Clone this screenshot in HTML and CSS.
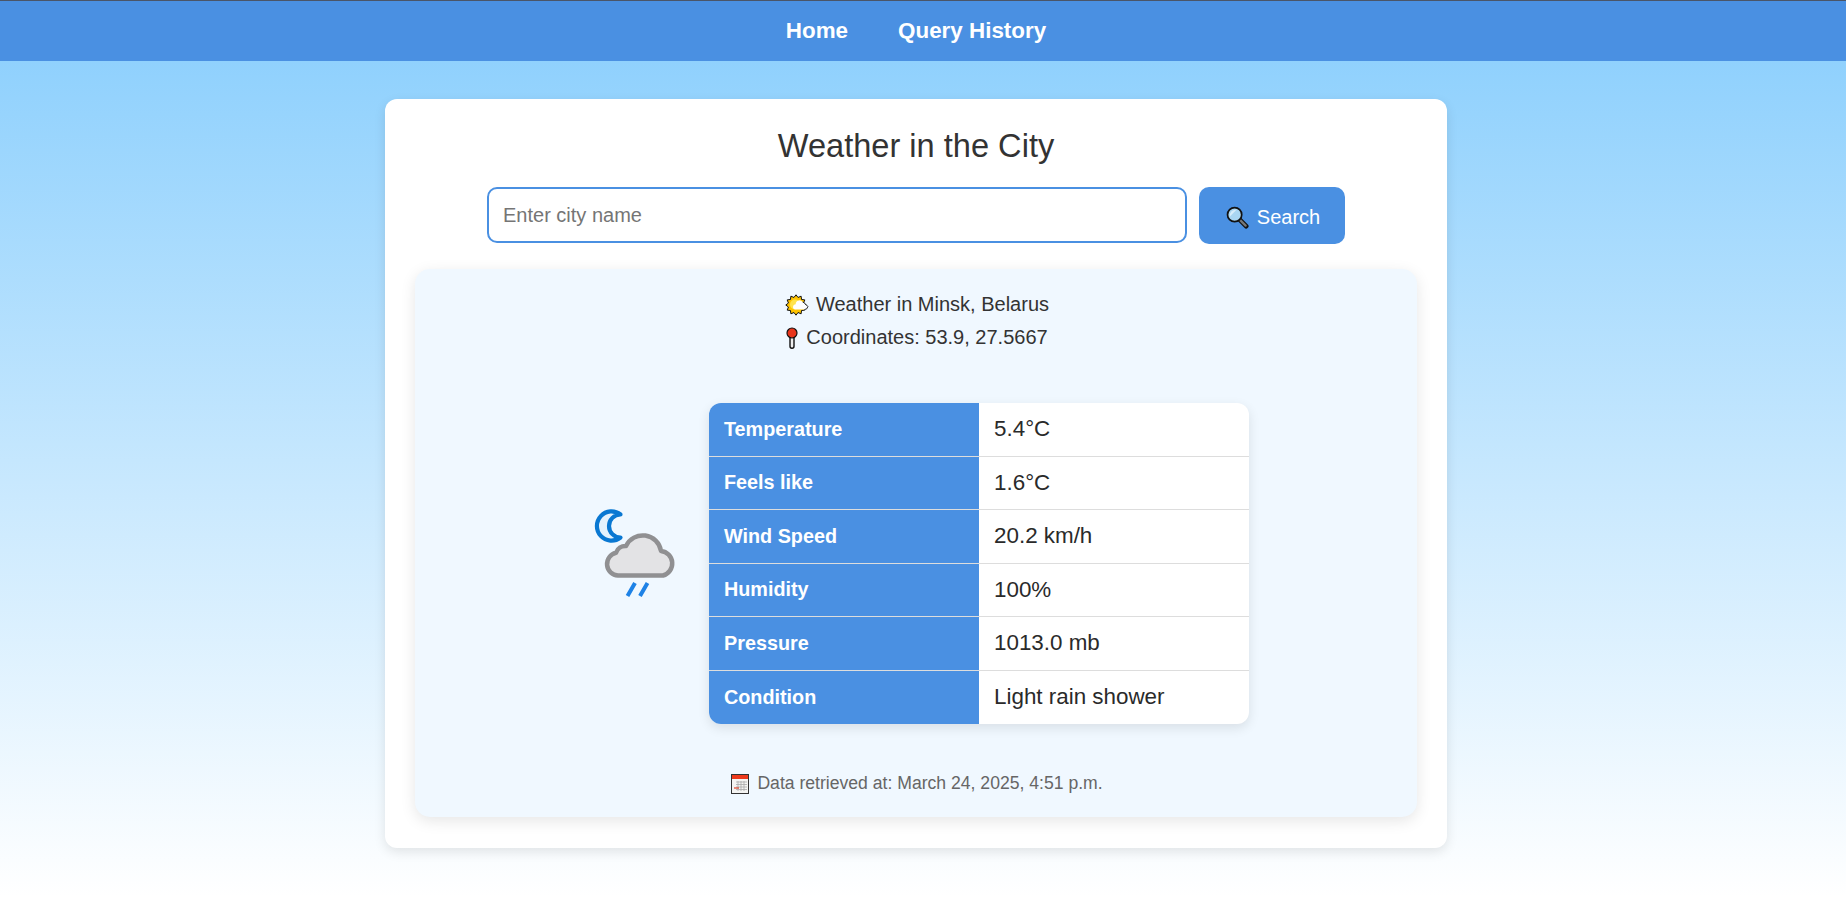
FILE: index.html
```html
<!DOCTYPE html>
<html lang="en">
<head>
<meta charset="utf-8">
<title>Weather in the City</title>
<link rel="stylesheet" href="styles.css">
</head>
<body>
<nav class="nav">
  <a class="nav-link" href="#">Home</a>
  <a class="nav-link" href="#">Query History</a>
</nav>
<main class="card">
  <h1 class="title">Weather in the City</h1>
  <form class="search">
    <input class="search-input" type="text" placeholder="Enter city name">
    <button class="search-btn" type="button">
      <svg class="ico-search" viewBox="0 0 24 24"><path d="M14 14l7 7" stroke="#111" stroke-width="5" stroke-linecap="round"/><path d="M14.500 14.500l6 6" stroke="#777" stroke-width="2.400" stroke-linecap="round"/><circle cx="9" cy="9" r="7.400" fill="#a9d6f2" stroke="#111" stroke-width="1.800"/><path d="M4 11a6 6 0 0 1 7-7L4 11z" fill="#d8eefb"/></svg>
      Search
    </button>
  </form>
  <section class="result">
    <p class="place"><svg class="ico-sun" viewBox="-1 0 24 21"><polygon points="20.2,10.5 17.53,12.52 18.83,15.6 15.52,16.02 15.1,19.33 12.02,18.03 10,20.7 7.98,18.03 4.9,19.33 4.48,16.02 1.17,15.6 2.47,12.52 -0.2,10.5 2.47,8.48 1.17,5.4 4.48,4.98 4.9,1.67 7.98,2.97 10,0.3 12.02,2.97 15.1,1.67 15.52,4.98 18.83,5.4 17.53,8.48" fill="#ffc400" stroke="#111" stroke-width="1" stroke-linejoin="miter"/><circle cx="9" cy="10" r="5" fill="#ffe34d"/><path d="M9.500 15a2.600 2.600 0 0 1 .2-5.200 3.800 3.800 0 0 1 7-2.200 3.400 3.400 0 0 1 2.800 2.400q2.400 1.300 2.400 2-.6 3-3.200 3z" fill="#fff"/><path d="M16.700 7.600a3.400 3.400 0 0 1 2.800 2.400q2.400 1.300 2.400 2-.6 3-3.200 3" fill="none" stroke="#111" stroke-width=".9"/></svg> Weather in Minsk, Belarus</p>
    <p class="coords"><svg class="ico-pin" viewBox="0 0 12 22"><rect x="4" y="9" width="4" height="12.300" rx="2" fill="#eee" stroke="#111" stroke-width="1.400"/><circle cx="6" cy="6" r="5" fill="#e8361c" stroke="#111" stroke-width="1.200"/></svg> Coordinates: 53.9, 27.5667</p>
    <div class="details">
      <svg class="ico-weather" viewBox="583 505 96 96">
        <path d="M620.500 514.500A14.600 14.600 0 1 0 620.500 537.500A11.500 11.500 0 0 1 620.500 514.500z" fill="#e4f2fd" stroke="#0a78d2" stroke-width="4.200" stroke-linejoin="round"/>
        <path d="M618 575.500A11.500 11.500 0 0 1 616 552.800A10 10 0 0 1 626 546A18.500 18.500 0 0 1 661 551A12.500 12.500 0 0 1 663 575.500z" fill="#e3e3e5" stroke="#909092" stroke-width="4.500" stroke-linejoin="round"/>
        <path d="M627.500 596l7.500-13M640 596l7.500-13" stroke="#1e82e6" stroke-width="4" fill="none"/>
      </svg>
      <table class="stats">
        <tr><th>Temperature</th><td>5.4°C</td></tr>
        <tr><th>Feels like</th><td>1.6°C</td></tr>
        <tr><th>Wind Speed</th><td>20.2 km/h</td></tr>
        <tr><th>Humidity</th><td>100%</td></tr>
        <tr><th>Pressure</th><td>1013.0 mb</td></tr>
        <tr><th>Condition</th><td>Light rain shower</td></tr>
      </table>
    </div>
    <p class="stamp"><svg class="ico-cal" viewBox="0 0 18 20"><rect x=".5" y=".5" width="17" height="19" fill="#f4f4f2" stroke="#333"/><rect x="1" y="1" width="16" height="4" fill="#ee3a1c"/><path d="M5 8h11M5 10.500h11M5 13h11M5 15.500h11M7 7v10M10 7v10M13 7v10" stroke="#aaa" stroke-width=".8"/><path d="M3 14h5" stroke="#e2452c" stroke-width="1.200"/></svg> Data retrieved at: March 24, 2025, 4:51 p.m.</p>
  </section>
</main>
</body>
</html>
```
FILE: styles.css
```css
* { box-sizing: border-box; }
html, body { margin: 0; height: 100%; }
body {
  font-family: "Liberation Sans", Arial, sans-serif;
  color: #333;
  min-height: 897px;
  overflow: hidden;
  background: linear-gradient(to bottom, #90d1fd 61px, #ffffff 897px);
  padding-right: 14px;
}
.nav {
  margin-right: -14px;
  padding-right: 14px;
  height: 61px;
  background: #4a90e2;
  border-top: 1px solid #4a5568;
  display: flex;
  justify-content: center;
  align-items: center;
  gap: 50px;
}
.nav-link { color: #fff; font-weight: bold; font-size: 22.4px; text-decoration: none; }
.card {
  width: 1062px;
  height: 749px;
  margin: 38px auto 0;
  background: #fff;
  border-radius: 12px;
  box-shadow: 0 4px 12px rgba(0,0,0,.1);
  padding: 27px 30px 30px;
}
.title { margin: 0; font-size: 32.6px; font-weight: normal; text-align: center; line-height: 40px; }
.search { display: flex; justify-content: center; gap: 12px; margin-top: 21px; }
.search-input {
  width: 700px; height: 56px;
  border: 2px solid #4a90e2;
  border-radius: 10px;
  padding: 0 14px;
  font: 20px "Liberation Sans", Arial, sans-serif;
  outline: none;
}
.search-input::placeholder { color: #757575; }
.search-btn {
  width: 146px; height: 57px;
  border: 0;
  border-radius: 10px;
  background: #4a90e2;
  color: #fff;
  font: 20px "Liberation Sans", Arial, sans-serif;
  padding: 3px 0 0 2px;
  display: flex; align-items: center; justify-content: center; gap: 8px;
}
.ico-search { width: 23px; height: 23px; }
.result {
  margin-top: 25px;
  height: 548px;
  background: #f0f8ff;
  border-radius: 15px;
  box-shadow: 0 4px 15px rgba(0,0,0,.1);
  padding: 19px 0 0 2px;
  display: flex; flex-direction: column; align-items: center;
}
.place, .coords { margin: 0; font-size: 20px; line-height: 33px; display: flex; align-items: center; }
.place { gap: 7px; }
.coords { gap: 8px; }
.ico-sun { width: 24px; height: 22px; }
.ico-pin { width: 12px; height: 22px; }
.details { display: flex; align-items: center; gap: 30px; margin: 49px 2px 0 0; }
.ico-weather { width: 96px; height: 96px; margin-bottom: 21px; }
.stats {
  width: 540px; height: 321px;
  border-collapse: separate; border-spacing: 0;
  border-radius: 12px; overflow: hidden;
  background: #fff;
  box-shadow: 0 4px 12px rgba(0,0,0,.1);
}
.stats th, .stats td { padding: 0 15px; text-align: left; border-bottom: 1px solid #ddd; height: 53.5px; width: 270px; }
.stats tr:last-child th, .stats tr:last-child td { border-bottom: 0; }
.stats th { background: #4a90e2; color: #fff; font-size: 19.8px; }
.stats td { font-size: 22.4px; color: #2a2a2a; }
.stamp { margin: 49px 0 0; font-size: 17.6px; color: #666; display: flex; align-items: center; gap: 8px; }
.ico-cal { width: 18px; height: 20px; }
```
